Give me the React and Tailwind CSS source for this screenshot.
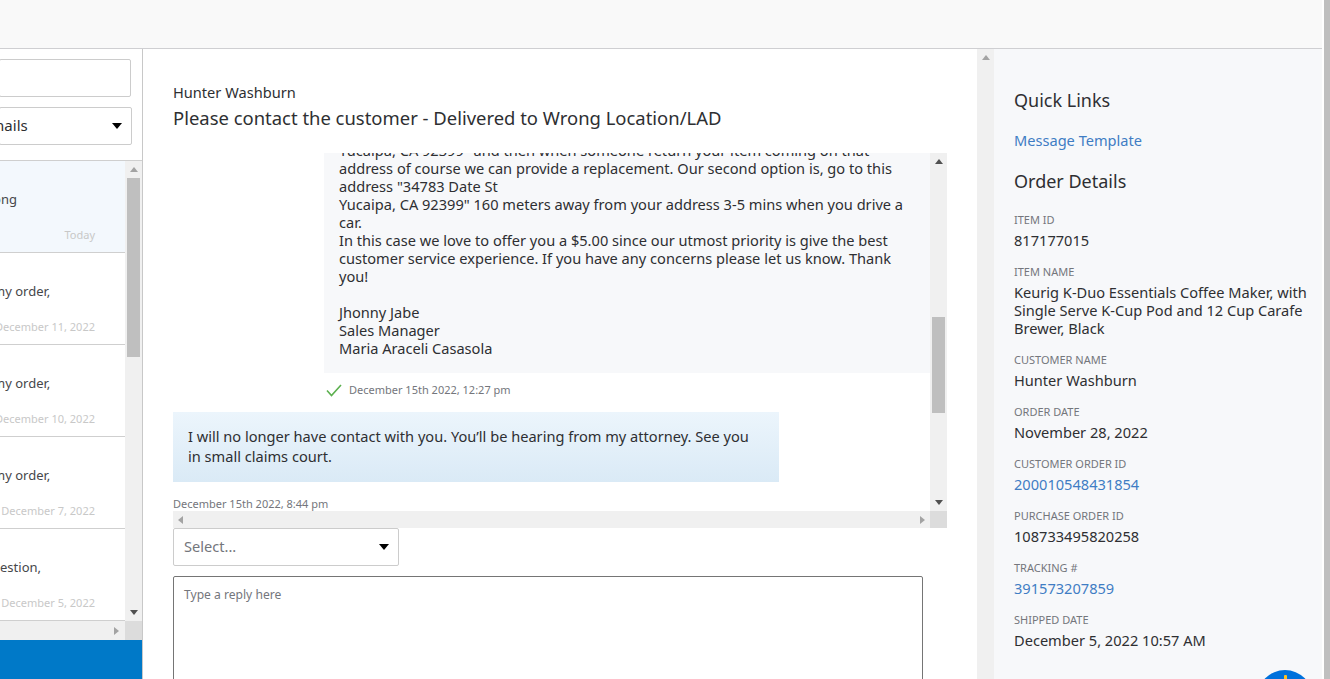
import React from 'react';

const FONT = { fontFamily: '"Noto Sans", sans-serif' };

function Arrow({ dir, dark }) {
  const points = {
    up: '0,5 4,0 8,5',
    down: '0,0 8,0 4,5',
    left: '5,0 5,8 0,4',
    right: '0,0 5,4 0,8',
  }[dir];
  const vertical = dir === 'up' || dir === 'down';
  return (
    <svg width={vertical ? 8 : 5} height={vertical ? 5 : 8} viewBox={vertical ? '0 0 8 5' : '0 0 5 8'}>
      <polygon points={points} fill={dark ? '#505050' : '#a3a3a3'} />
    </svg>
  );
}

function Caret() {
  return (
    <svg width="10" height="6" viewBox="0 0 10 6">
      <polygon points="0,0 10,0 5,6" fill="#000000" />
    </svg>
  );
}

const threads = [
  { text: 'my order,', date: 'December 11, 2022', shift: 'ml-[-7px]' },
  { text: 'my order,', date: 'December 10, 2022', shift: 'ml-[-7px]' },
  { text: 'my order,', date: 'December 7, 2022', shift: 'ml-[-7px]' },
  { text: 'question,', date: 'December 5, 2022', shift: 'ml-[-16px]' },
];

const details = [
  { label: 'ITEM ID', value: ['817177015'] },
  { label: 'ITEM NAME', value: ['Keurig K-Duo Essentials Coffee Maker, with', 'Single Serve K-Cup Pod and 12 Cup Carafe', 'Brewer, Black'] },
  { label: 'CUSTOMER NAME', value: ['Hunter Washburn'] },
  { label: 'ORDER DATE', value: ['November 28, 2022'] },
  { label: 'CUSTOMER ORDER ID', value: ['200010548431854'], link: true },
  { label: 'PURCHASE ORDER ID', value: ['108733495820258'] },
  { label: 'TRACKING #', value: ['391573207859'], link: true },
  { label: 'SHIPPED DATE', value: ['December 5, 2022 10:57 AM'] },
];

function ThreadList() {
  return (
    <aside className="w-[143px] shrink-0 h-full flex flex-col border-r border-[#c8c8c8] overflow-hidden">
      <div className="h-[112px] shrink-0 pt-[10px] border-b border-[#cfcfcf]">
        <div className="w-[132px] ml-[-1px] h-[38px] bg-white border border-[#cccccc] rounded-[2px]" />
        <div className="w-[133px] ml-[-1px] h-[38px] mt-[10px] bg-white border border-[#cccccc] rounded-[2px] flex items-center justify-between pr-[9px] pb-[1px] overflow-hidden">
          <span className="text-[15px] text-[#2e2f32] ml-[-18px]">Emails</span>
          <Caret />
        </div>
      </div>
      <div className="flex flex-1 min-h-0">
        <div className="w-[125px] shrink-0 overflow-hidden">
          <div className="h-[92px] bg-[#f3f8fd] border-b border-[#cfcfcf] flex flex-col justify-between overflow-hidden">
            <p className="text-[13px] leading-[18px] text-[#46474a] mt-[29px] ml-[-24px] whitespace-nowrap">Wrong</p>
            <p className="text-[11px] leading-[16px] text-[#c8c8c8] text-right pr-[30px] mb-[9px] whitespace-nowrap">Today</p>
          </div>
          {threads.map((t) => (
            <div key={t.date} className="h-[92px] border-b border-[#cfcfcf] flex flex-col justify-between overflow-hidden">
              <p className={`text-[13px] leading-[18px] text-[#46474a] mt-[29px] whitespace-nowrap ${t.shift}`}>{t.text}</p>
              <p className="text-[11px] leading-[16px] text-[#c8c8c8] mb-[9px] whitespace-nowrap flex justify-end pr-[30px]">{t.date}</p>
            </div>
          ))}
        </div>
        <div className="w-[17px] shrink-0 bg-[#f0f0f0] flex flex-col items-center relative">
          <div className="pt-[6px] h-[17px]"><Arrow dir="up" /></div>
          <div className="w-[13px] h-[179px] bg-[#bfbfbf]" />
          <div className="absolute top-[449px]"><Arrow dir="down" dark /></div>
        </div>
      </div>
      <div className="h-[19px] shrink-0 flex">
        <div className="w-[125px] bg-[#f0f0f0] flex items-center justify-end pr-[6px]"><Arrow dir="right" /></div>
        <div className="w-[17px] bg-[#dcdcdc]" />
      </div>
      <div className="h-[39px] shrink-0 bg-[#0079c8]" />
    </aside>
  );
}

function Conversation() {
  return (
    <main className="w-[834px] shrink-0 h-full bg-white pl-[30px] overflow-hidden">
      <p className="text-[14.6px] leading-[20px] text-[#2e2f32] mt-[33px]">Hunter Washburn</p>
      <h1 className="text-[18.45px] leading-[24px] text-[#2e2f32] mt-[4px] whitespace-nowrap">Please contact the customer - Delivered to Wrong Location/LAD</h1>
      <div className="w-[774px] h-[375px] mt-[23px] flex flex-col">
        <div className="flex h-[358px]">
          <div className="w-[757px] overflow-hidden">
            <div className="ml-[151px] w-[606px] h-[220px] bg-[#f7f8fa] px-[15px] overflow-hidden">
              <div className="text-[14.6px] leading-[18px] text-[#2e2f32] mt-[-12px]">
                <p>Yucaipa, CA 92399" and then when someone return your item coming on that</p>
                <p>address of course we can provide a replacement. Our second option is, go to this</p>
                <p>address "34783 Date St</p>
                <p>Yucaipa, CA 92399" 160 meters away from your address 3-5 mins when you drive a</p>
                <p>car.</p>
                <p>In this case we love to offer you a $5.00 since our utmost priority is give the best</p>
                <p>customer service experience. If you have any concerns please let us know. Thank</p>
                <p>you!</p>
                <p className="mt-[18px]">Jhonny Jabe</p>
                <p>Sales Manager</p>
                <p>Maria Araceli Casasola</p>
              </div>
            </div>
            <div className="ml-[153px] mt-[9px] h-[16px] flex items-center gap-[7px]">
              <svg width="16" height="13" viewBox="0 0 16 13">
                <path d="M1 6.5 L5.5 11.5 L15 1" fill="none" stroke="#5cb04f" strokeWidth="1.6" />
              </svg>
              <span className="text-[11px] leading-[16px] text-[#74767c]">December 15th 2022, 12:27 pm</span>
            </div>
            <div className="w-[606px] h-[70px] mt-[14px] px-[15px] pt-[14px] bg-gradient-to-b from-[#ecf5fc] to-[#daeaf6] text-[14.6px] leading-[20px] text-[#2e2f32]">
              I will no longer have contact with you. You’ll be hearing from my attorney. See you in small claims court.
            </div>
            <p className="text-[11px] leading-[16px] text-[#74767c] mt-[14px]">December 15th 2022, 8:44 pm</p>
          </div>
          <div className="w-[17px] bg-[#f0f0f0] flex flex-col items-center">
            <div className="h-[17px] pt-[6px] shrink-0"><Arrow dir="up" dark /></div>
            <div className="w-[13px] h-[96px] mt-[147px] bg-[#bfbfbf] shrink-0" />
            <div className="mt-auto pb-[6px]"><Arrow dir="down" dark /></div>
          </div>
        </div>
        <div className="flex h-[17px]">
          <div className="w-[757px] bg-[#f0f0f0] flex items-center justify-between px-[5px]">
            <Arrow dir="left" />
            <Arrow dir="right" />
          </div>
          <div className="w-[17px] bg-[#dcdcdc]" />
        </div>
      </div>
      <div className="w-[226px] h-[38px] bg-white border border-[#cccccc] rounded-[2px] flex items-center justify-between pl-[10px] pr-[9px] pb-[1px]">
        <span className="text-[14.6px] text-[#74767c]">Select...</span>
        <Caret />
      </div>
      <div className="w-[750px] h-[140px] mt-[10px] border border-[#757575] rounded-[2px] px-[10px] py-[9px] text-[12.1px] leading-[18px] text-[#74767c]">
        Type a reply here
      </div>
    </main>
  );
}

function OrderPanel() {
  return (
    <section className="w-[345px] shrink-0 h-full flex">
      <div className="w-[17px] bg-[#f0f0f0] flex justify-center pt-[6px]"><Arrow dir="up" /></div>
      <div className="w-[328px] bg-[#f7f8fa] pl-[20px] overflow-hidden">
        <h2 className="text-[18px] leading-[24px] text-[#2e2f32] mt-[39px]">Quick Links</h2>
        <a className="block text-[14.6px] leading-[20px] text-[#3f7dc4] mt-[18px]">Message Template</a>
        <h2 className="text-[18px] leading-[24px] text-[#2e2f32] mt-[19px]">Order Details</h2>
        <div className="mt-[19px]">
          {details.map((d) => (
            <div key={d.label} className="mb-[15px]">
              <p className="text-[11px] leading-[16px] text-[#74767c]">{d.label}</p>
              <div className={`text-[14.6px] leading-[18px] mt-[3px] ${d.link ? 'text-[#3f7dc4]' : 'text-[#2e2f32]'}`}>
                {d.value.map((line) => <p key={line} className="whitespace-nowrap">{line}</p>)}
              </div>
            </div>
          ))}
        </div>
      </div>
    </section>
  );
}

export default function App() {
  return (
    <div className="w-[1330px] h-[679px] bg-white overflow-hidden flex relative" style={FONT}>
      <div className="w-[1322px] shrink-0 h-full flex flex-col">
        <header className="h-[49px] shrink-0 bg-[#f9f9f9] border-b border-[#cfcfd2]" />
        <div className="flex flex-1 min-h-0">
          <ThreadList />
          <Conversation />
          <OrderPanel />
        </div>
      </div>
      <div className="ml-[2px] w-[6px] h-full bg-[#bfbfbf]" />
      <div className="absolute left-[1257px] top-[670px] w-[56px] h-[56px] rounded-full bg-[#0071dc] flex justify-center">
        <div className="w-[3px] h-[8px] mt-[5px] bg-[#ffc220] rounded-[1px]" />
      </div>
    </div>
  );
}
